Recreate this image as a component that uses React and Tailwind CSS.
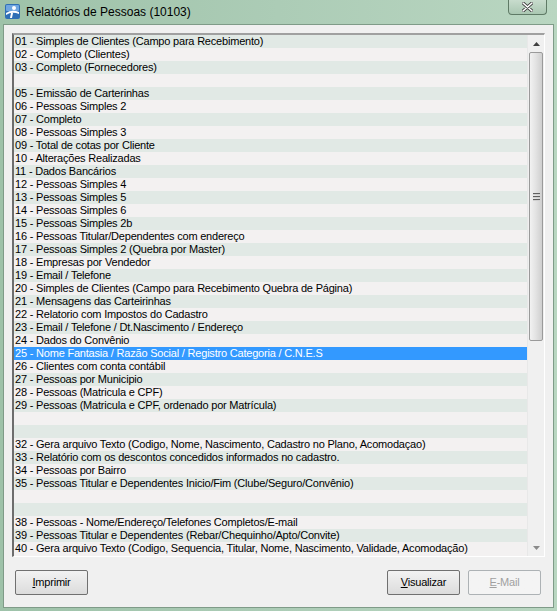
import React from 'react'

const ROWS = [
  '01 - Simples de Clientes (Campo para Recebimento)',
  '02 - Completo (Clientes)',
  '03 - Completo (Fornecedores)',
  '',
  '05 - Emissão de Carterinhas',
  '06 - Pessoas Simples 2',
  '07 - Completo',
  '08 - Pessoas Simples 3',
  '09 - Total de cotas por Cliente',
  '10 - Alterações Realizadas',
  '11 - Dados Bancários',
  '12 - Pessoas Simples 4',
  '13 - Pessoas Simples 5',
  '14 - Pessoas Simples 6',
  '15 - Pessoas Simples 2b',
  '16 - Pessoas Titular/Dependentes com endereço',
  '17 - Pessoas Simples 2 (Quebra por Master)',
  '18 - Empresas por Vendedor',
  '19 - Email / Telefone',
  '20 - Simples de Clientes (Campo para Recebimento Quebra de Página)',
  '21 - Mensagens das Carteirinhas',
  '22 - Relatorio com Impostos do Cadastro',
  '23 - Email / Telefone / Dt.Nascimento / Endereço',
  '24 - Dados do Convênio',
  '25 - Nome Fantasia / Razão Social / Registro Categoria / C.N.E.S',
  '26 - Clientes com conta contábil',
  '27 - Pessoas por Municipio',
  '28 - Pessoas (Matricula e CPF)',
  '29 - Pessoas (Matricula e CPF, ordenado por Matrícula)',
  '',
  '',
  '32 - Gera arquivo Texto (Codigo, Nome, Nascimento, Cadastro no Plano, Acomodaçao)',
  '33 - Relatório com os descontos concedidos informados no cadastro.',
  '34 - Pessoas por Bairro',
  '35 - Pessoas Titular e Dependentes Inicio/Fim (Clube/Seguro/Convênio)',
  '',
  '',
  '38 - Pessoas - Nome/Endereço/Telefones Completos/E-mail',
  '39 - Pessoas Titular e Dependentes (Rebar/Chequinho/Apto/Convite)',
  '40 - Gera arquivo Texto (Codigo, Sequencia, Titular, Nome, Nascimento, Validade, Acomodação)',
]

const SELECTED = 24

function Button({ children, disabled, className = '' }) {
  return (
    <div
      className={`h-[25px] w-[73px] flex items-center justify-center border rounded-[2px] bg-gradient-to-b text-[11px] tracking-[-0.2px] ${disabled ? 'text-[#a0a0a0] border-[#adb2b5] from-[#f4f4f4] to-[#f4f4f4]' : 'text-black border-[#707070] from-[#f2f2f2] to-[#dcdcdc]'} ${className}`}
    >
      {children}
    </div>
  )
}

function ScrollBar() {
  return (
    <div className="w-[17px] flex flex-col bg-[#f0f0f0] border-l border-[#e8e8e8]">
      <div className="h-[17px] flex items-center justify-center">
        <svg width="7" height="4" viewBox="0 0 7 4"><path d="M0 4 L3.5 0 L7 4 Z" fill="#404040" /></svg>
      </div>
      <div className="h-[289px] mx-[1px] rounded-[2px] border border-[#9a9a9a] bg-gradient-to-r from-[#f2f2f2] via-[#e2e2e2] to-[#cfcfcf] flex items-center justify-center">
        <div className="flex flex-col gap-[1px]">
          <div className="w-[7px] h-[2px] bg-[#606060] border-b border-[#d0d0d0]" />
          <div className="w-[7px] h-[2px] bg-[#606060] border-b border-[#d0d0d0]" />
          <div className="w-[7px] h-[2px] bg-[#606060] border-b border-[#d0d0d0]" />
        </div>
      </div>
      <div className="flex-1" />
      <div className="h-[17px] flex items-center justify-center">
        <svg width="7" height="4" viewBox="0 0 7 4"><path d="M0 0 L3.5 4 L7 0 Z" fill="#8a8a8a" /></svg>
      </div>
    </div>
  )
}

export default function App() {
  return (
    <div
      className="w-[557px] h-[611px] flex flex-col bg-gradient-to-r from-[#9ec2a9] via-[#acccb6] to-[#b9d6c1]"
      style={{ fontFamily: 'Tahoma, "Liberation Sans", Arial, sans-serif' }}
    >
      <div className="h-[24px] flex items-start relative">
        <svg className="ml-[5px] mt-[4px]" width="15" height="15" viewBox="0 0 15 15">
          <rect x="0" y="0" width="15" height="15" rx="2" fill="#2f6fb5" />
          <rect x="1" y="1" width="13" height="6" rx="1" fill="#6fa6e0" />
          <circle cx="9" cy="4" r="2" fill="#ffffff" />
          <path d="M1 9 Q7 5 14 8 L14 10 Q7 7 1 11 Z" fill="#ffffff" />
          <path d="M6 9 L8 9 L7 14 L5 14 Z" fill="#ffffff" />
        </svg>
        <span
          className="ml-[6px] mt-[4px] text-[12px] text-black leading-[16px]"
          style={{ fontFamily: '"Liberation Sans", Arial, sans-serif' }}
        >
          Relatórios de Pessoas (10103)
        </span>
        <div className="absolute right-[10px] top-0 w-[39px] h-[15px] rounded-b-[4px] border border-t-0 border-[#5f7a66] bg-gradient-to-b from-[#c8dccd] to-[#aac7b2] flex items-center justify-center">
          <svg width="11" height="10" viewBox="0 0 11 10">
            <path d="M1 1 L10 9 M10 1 L1 9" stroke="#3c3c3c" strokeWidth="3.2" strokeLinecap="round" />
            <path d="M1 1 L10 9 M10 1 L1 9" stroke="#ffffff" strokeWidth="1.6" strokeLinecap="round" />
          </svg>
        </div>
      </div>

      <div className="flex-1 mx-[3px] mb-[3px] bg-[#f0f0f0] border border-[#7f9b88] flex flex-col pl-[8px] pr-[8px] pt-[8px]">
        <div className="h-[524px] w-[533px] flex border-t-2 border-l-2 border-t-[#a0a0a0] border-l-[#6d6d6d] border-r border-b border-r-[#ffffff] border-b-[#ffffff] bg-[#f3f1f1]">
          <div className="flex-1 overflow-hidden">
            {ROWS.map((r, i) => (
              <div
                key={i}
                className={`h-[13px] leading-[13px] pl-[1px] text-[11px] tracking-[-0.2px] whitespace-nowrap ${i === SELECTED ? 'bg-[#3399ff] text-white' : i % 2 === 0 ? 'bg-[#e1e9e5] text-black' : 'bg-[#f3f1f1] text-black'}`}
              >
                {r}
              </div>
            ))}
          </div>
          <ScrollBar />
        </div>

        <div className="flex items-center mt-[13px] pl-[3px]">
          <Button><span><u>I</u>mprimir</span></Button>
          <div className="flex-1" />
          <Button><span><u>V</u>isualizar</span></Button>
          <Button disabled className="ml-[8px] mr-[4px]"><span><u>E</u>-Mail</span></Button>
        </div>
      </div>
    </div>
  )
}
